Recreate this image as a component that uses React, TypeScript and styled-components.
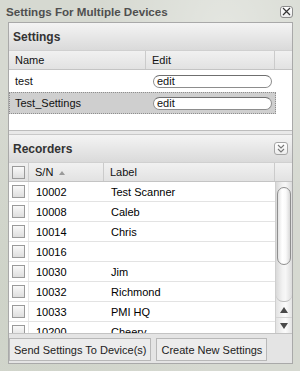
import React from "react";
import styled, { createGlobalStyle } from "styled-components";

const GlobalStyle = createGlobalStyle`
  html, body { margin: 0; padding: 0; }
  body {
    font-family: "Liberation Sans", Arial, Helvetica, sans-serif;
    background: #d7dad3;
  }
`;

const Window = styled.div`
  width: 300px;
  height: 371px;
  box-sizing: border-box;
  overflow: hidden;
  display: flex;
  flex-direction: column;
  background:
    radial-gradient(ellipse at 75% 10%, rgba(255,255,255,0.35), rgba(255,255,255,0) 40%),
    radial-gradient(ellipse at 10% 80%, rgba(180,190,170,0.25), rgba(255,255,255,0) 50%),
    #d6d9d1;
`;

const TitleBar = styled.div`
  height: 22px;
  flex: none;
  display: flex;
  align-items: center;
  justify-content: space-between;
  padding: 0 7px 0 6px;
`;

const Title = styled.div`
  font-weight: bold;
  font-size: 11.6px;
  color: #4f4f4f;
  white-space: nowrap;
`;

const CloseButton = styled.div`
  width: 13px;
  height: 12px;
  box-sizing: border-box;
  border: 1px solid #8c8c8c;
  border-radius: 3px;
  background: linear-gradient(#ffffff, #ececec);
  display: flex;
  align-items: center;
  justify-content: center;
  margin-top: 1px;
`;

const Panel = styled.div`
  margin: 0 7px 0 8px;
  height: 342px;
  box-sizing: border-box;
  border: 1px solid #a9a9a9;
  background: #e3e3e3;
  display: flex;
  flex-direction: column;
  overflow: hidden;
`;

const SectionHeader = styled.div`
  height: 27px;
  flex: none;
  box-sizing: border-box;
  display: flex;
  align-items: center;
  justify-content: space-between;
  padding: 0 4px 0 4px;
  background: linear-gradient(#f4f4f4, #dadada);
  font-weight: bold;
  font-size: 12px;
  color: #333;
`;

const CollapseButton = styled.div`
  width: 14px;
  height: 13px;
  box-sizing: border-box;
  border: 1px solid #a5a5a5;
  border-radius: 3px;
  background: linear-gradient(#ffffff, #ededed);
  display: flex;
  align-items: center;
  justify-content: center;
`;

const ColHeader = styled.div<{ $cols: string }>`
  height: 20px;
  flex: none;
  box-sizing: border-box;
  display: grid;
  grid-template-columns: ${(p) => p.$cols};
  background: linear-gradient(#f1f1f1, #e2e2e2);
  border-top: 1px solid #d0d0d0;
  border-bottom: 1px solid #c4c4c4;
  font-size: 11px;
  color: #111;
`;

const HeadCell = styled.div<{ $pad?: number; $last?: boolean }>`
  display: flex;
  align-items: center;
  padding-left: ${(p) => p.$pad ?? 6}px;
  border-right: ${(p) => (p.$last ? "none" : "1px solid #cbcbcb")};
  overflow: hidden;
  white-space: nowrap;
`;

const SortArrow = styled.span`
  display: inline-block;
  width: 0;
  height: 0;
  margin-left: 6px;
  margin-top: 1px;
  border-left: 3.5px solid transparent;
  border-right: 3.5px solid transparent;
  border-bottom: 4px solid #9a9a9a;
`;

const SettingsBody = styled.div`
  height: 60px;
  flex: none;
  background: #fff;
`;

const SettingsRow = styled.div<{ $selected?: boolean }>`
  width: 267px;
  height: 22px;
  box-sizing: border-box;
  display: grid;
  grid-template-columns: 137px 130px;
  align-items: center;
  font-size: 11px;
  color: #111;
  background: ${(p) => (p.$selected ? "#cfcfcf" : "#fff")};
  border: 1px dotted ${(p) => (p.$selected ? "#8e8e8e" : "transparent")};
`;

const NameCell = styled.div`
  padding-left: 5px;
`;

const EditField = styled.div`
  margin-left: 6px;
  width: 119px;
  height: 13px;
  box-sizing: border-box;
  border: 1px solid #8d8d8d;
  border-top-color: #6f6f6f;
  border-radius: 7px;
  background: #fff;
  font-size: 11px;
  line-height: 11px;
  padding-left: 3px;
  color: #111;
`;

const SectionGap = styled.div`
  height: 5px;
  flex: none;
  box-sizing: border-box;
  border-top: 1px solid #bdbdbd;
  border-bottom: 1px solid #c9c9c9;
  background: #e9e9e9;
`;

const RecordersBody = styled.div`
  height: 151px;
  flex: none;
  display: flex;
  background: #fff;
  overflow: hidden;
`;

const RowsArea = styled.div`
  width: 266px;
  flex: none;
  overflow: hidden;
`;

const DataRow = styled.div`
  height: 20px;
  box-sizing: border-box;
  display: grid;
  grid-template-columns: 20px 75px 171px;
  border-bottom: 1px solid #e3e3e3;
  font-size: 11px;
  color: #000;
`;

const DataCell = styled.div<{ $divider?: boolean }>`
  display: flex;
  align-items: center;
  padding-left: ${(p) => (p.$divider ? 3 : 7)}px;
  border-right: ${(p) => (p.$divider ? "1px solid #e6e6e6" : "none")};
  white-space: nowrap;
  overflow: hidden;
`;

const CheckBox = styled.span`
  width: 13px;
  height: 13px;
  box-sizing: border-box;
  border: 1px solid #9a9a9a;
  background: linear-gradient(#f9f9f9, #dedede);
  display: inline-block;
  flex: none;
`;

const Scrollbar = styled.div`
  width: 17px;
  flex: none;
  box-sizing: border-box;
  border-left: 1px solid #cfcfcf;
  display: flex;
  flex-direction: column;
  background: linear-gradient(to right, #e2e2e2, #f7f7f7 45%, #fbfbfb 60%, #e4e4e4);
`;

const Groove = styled.div`
  flex: 1;
  padding: 5px 1px 0 1px;
  border-bottom-left-radius: 7px;
  border-bottom-right-radius: 7px;
  border-bottom: 1px solid #bdbdbd;
  background: linear-gradient(to right, #d9d9d9, #f2f2f2 40%, #f7f7f7 60%, #dcdcdc);
`;

const Thumb = styled.div`
  height: 78px;
  box-sizing: border-box;
  border: 1px solid #8f8f8f;
  border-radius: 7px;
  background: linear-gradient(to right, #e3e3e3, #ffffff 35%, #fafafa 65%, #d9d9d9);
`;

const ArrowBox = styled.div<{ $top?: boolean }>`
  height: 15px;
  flex: none;
  display: flex;
  align-items: center;
  justify-content: center;
  border-top: ${(p) => (p.$top ? "1px solid #d4d4d4" : "none")};
`;

const ArrowGlyph = styled.span<{ $down?: boolean }>`
  width: 0;
  height: 0;
  border-left: 4px solid transparent;
  border-right: 4px solid transparent;
  ${(p) =>
    p.$down
      ? "border-top: 6px solid #4a4a4a;"
      : "border-bottom: 6px solid #4a4a4a;"}
`;

const Footer = styled.div`
  height: 30px;
  flex: none;
  box-sizing: border-box;
  border-top: 1px solid #c3c3c3;
  background: #e4e4e4;
  display: flex;
  gap: 5px;
  padding: 4px 0 0 0;
  align-items: flex-start;
`;

const FooterButton = styled.div`
  height: 23px;
  box-sizing: border-box;
  padding: 0 4px;
  display: flex;
  align-items: center;
  border: 1px solid #b8b8b8;
  background: #ececec;
  font-size: 11px;
  color: #222;
  white-space: nowrap;
`;

const settings = [
  { name: "test", selected: false },
  { name: "Test_Settings", selected: true },
];

const recorders = [
  { sn: "10002", label: "Test Scanner" },
  { sn: "10008", label: "Caleb" },
  { sn: "10014", label: "Chris" },
  { sn: "10016", label: "" },
  { sn: "10030", label: "Jim" },
  { sn: "10032", label: "Richmond" },
  { sn: "10033", label: "PMI HQ" },
  { sn: "10200", label: "Cheery" },
];

export default function App() {
  return (
    <>
      <GlobalStyle />
      <Window>
        <TitleBar>
          <Title>Settings For Multiple Devices</Title>
          <CloseButton>
            <svg width="9" height="9" viewBox="0 0 9 9">
              <path d="M1 1 L8 8 M8 1 L1 8" stroke="#333" strokeWidth="1.2" />
            </svg>
          </CloseButton>
        </TitleBar>
        <Panel>
          <SectionHeader>Settings</SectionHeader>
          <ColHeader $cols="137px 129px 1fr">
            <HeadCell>Name</HeadCell>
            <HeadCell>Edit</HeadCell>
            <HeadCell $last />
          </ColHeader>
          <SettingsBody>
            {settings.map((s) => (
              <SettingsRow key={s.name} $selected={s.selected}>
                <NameCell>{s.name}</NameCell>
                <EditField>edit</EditField>
              </SettingsRow>
            ))}
          </SettingsBody>
          <SectionGap />
          <SectionHeader>
            Recorders
            <CollapseButton>
              <svg width="8" height="9" viewBox="0 0 8 9">
                <path d="M1 1 L4 4 L7 1 M1 5 L4 8 L7 5" stroke="#777" strokeWidth="1.1" fill="none" />
              </svg>
            </CollapseButton>
          </SectionHeader>
          <ColHeader $cols="20px 75px 171px 1fr">
            <HeadCell $pad={3}>
              <CheckBox />
            </HeadCell>
            <HeadCell>
              S/N
              <SortArrow />
            </HeadCell>
            <HeadCell>Label</HeadCell>
            <HeadCell $last />
          </ColHeader>
          <RecordersBody>
            <RowsArea>
              {recorders.map((r) => (
                <DataRow key={r.sn}>
                  <DataCell $divider>
                    <CheckBox />
                  </DataCell>
                  <DataCell>{r.sn}</DataCell>
                  <DataCell>{r.label}</DataCell>
                </DataRow>
              ))}
            </RowsArea>
            <Scrollbar>
              <Groove>
                <Thumb />
              </Groove>
              <ArrowBox>
                <ArrowGlyph />
              </ArrowBox>
              <ArrowBox $top>
                <ArrowGlyph $down />
              </ArrowBox>
            </Scrollbar>
          </RecordersBody>
          <Footer>
            <FooterButton>Send Settings To Device(s)</FooterButton>
            <FooterButton>Create New Settings</FooterButton>
          </Footer>
        </Panel>
      </Window>
    </>
  );
}
